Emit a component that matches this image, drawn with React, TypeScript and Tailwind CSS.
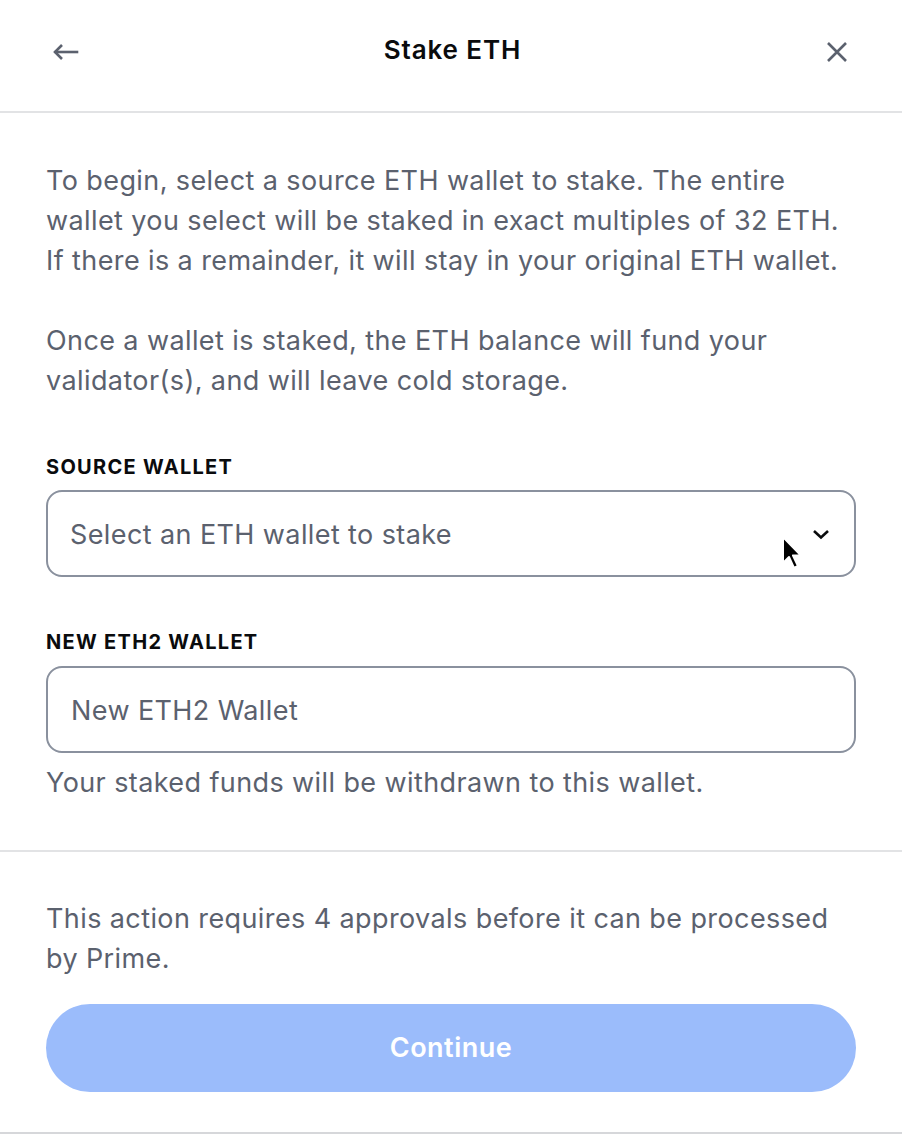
import React from "react";

export default function App() {
  return (
    <div className="relative w-[902px] h-[1134px] bg-white border-b-2 border-[#d6d7da] text-[#5b616e] font-['Inter',sans-serif] overflow-hidden">
      <header className="h-[113px] border-b-2 border-[#e2e3e5] flex items-center justify-between pl-[52px] pr-[53px] pb-[8px]">
        <svg width="28" height="20" viewBox="0 0 28 20" fill="none" stroke="#5b616e" strokeWidth="2.6" strokeLinecap="square">
          <path d="M4 10H25" />
          <path d="M10 3L3 10L10 17" strokeLinecap="butt" />
        </svg>
        <h1 className="text-[26px] font-semibold text-[#0a0b0d] tracking-[0.9px] mb-[4px]">Stake ETH</h1>
        <svg width="24" height="24" viewBox="0 0 24 24" fill="none" stroke="#5b616e" strokeWidth="2.6">
          <path d="M3 3L21 21M21 3L3 21" />
        </svg>
      </header>

      <main className="px-[46px] pt-[48px] text-[27px] tracking-[0.4px]">
        <p className="leading-[40px]">
          To begin, select a source ETH wallet to stake. The entire wallet you select will be staked in exact multiples of 32 ETH. If there is a remainder, it will stay in your original ETH wallet.
        </p>
        <p className="leading-[40px] mt-[40px]">
          Once a wallet is staked, the ETH balance will fund your validator(s), and will leave cold storage.
        </p>

        <div className="mt-[51px] text-[20px] font-bold text-[#0a0b0d] tracking-[1.3px] leading-[30px]">SOURCE WALLET</div>
        <div className="mt-[8px] h-[87px] border-2 border-[#8a919e] rounded-[16px] flex items-center justify-between pl-[22px] pr-[24px]">
          <span className="mt-[4px]">Select an ETH wallet to stake</span>
          <svg width="18" height="12" viewBox="0 0 18 12" fill="none" stroke="#0a0b0d" strokeWidth="2.6">
            <path d="M2 3L9 9.5L16 3" />
          </svg>
        </div>

        <div className="mt-[50px] text-[20px] font-bold text-[#0a0b0d] tracking-[1.3px] leading-[30px]">NEW ETH2 WALLET</div>
        <div className="mt-[9px] h-[87px] border-2 border-[#8a919e] rounded-[16px] flex items-center pl-[23px]">
          <span className="mt-[3px]">New ETH2 Wallet</span>
        </div>
        <p className="leading-[40px] mt-[10px]">Your staked funds will be withdrawn to this wallet.</p>
      </main>

      <div className="mt-[47px] border-t-2 border-[#e2e3e5]" />

      <footer className="px-[46px] pt-[47px] text-[27px] tracking-[0.4px]">
        <p className="leading-[40px]">This action requires 4 approvals before it can be processed by Prime.</p>
        <button className="mt-[25px] w-full h-[88px] rounded-full bg-[#9bbcfb] text-white font-semibold tracking-[0.5px]">Continue</button>
      </footer>

      <svg className="absolute left-[781px] top-[536px]" width="26" height="36" viewBox="0 0 26 36">
        <path d="M2 1V27L8 21L13 32L17 30L12 19.5H20Z" fill="#000" stroke="#fff" strokeWidth="2" strokeLinejoin="round" />
      </svg>
    </div>
  );
}
